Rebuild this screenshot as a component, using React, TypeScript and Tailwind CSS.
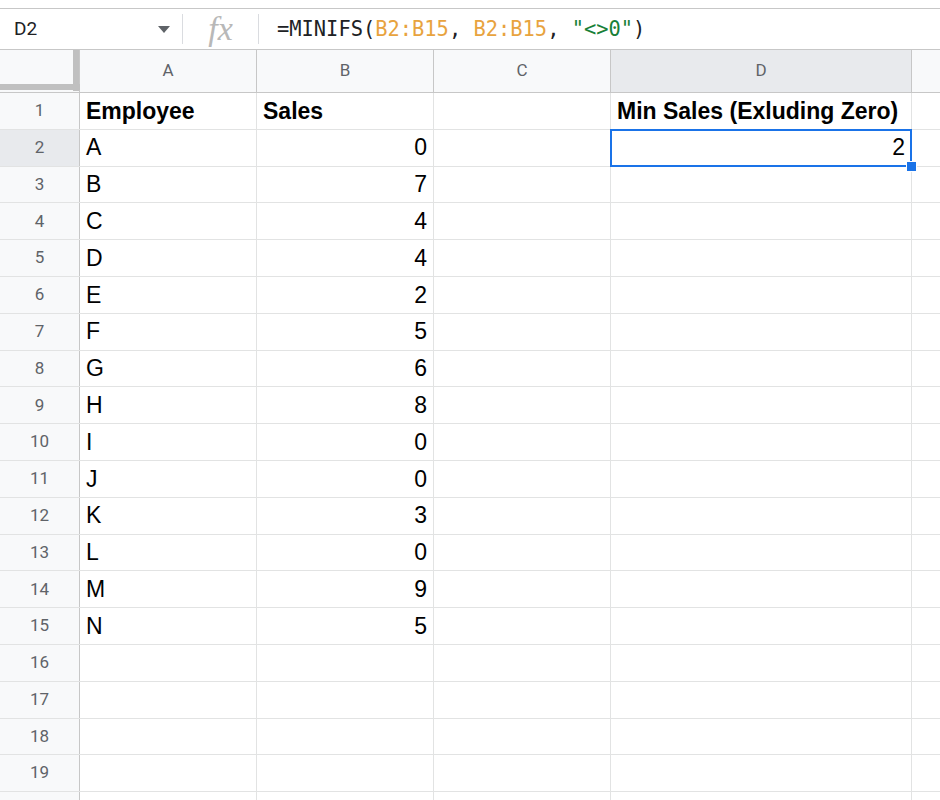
// Google Sheets — MINIFS 예시 화면
const COLS = [
  { k: "A", w: "w-[177px]" },
  { k: "B", w: "w-[177px]" },
  { k: "C", w: "w-[177px]" },
  { k: "D", w: "w-[301px]" },
  { k: "", w: "w-[177px]" }, // E열은 화면 밖으로 잘림
];

const DATA: [string, string][] = [
  ["A", "0"], ["B", "7"], ["C", "4"], ["D", "4"], ["E", "2"], ["F", "5"], ["G", "6"],
  ["H", "8"], ["I", "0"], ["J", "0"], ["K", "3"], ["L", "0"], ["M", "9"], ["N", "5"],
];

const cellFont = { fontFamily: '"Liberation Sans", Arial, sans-serif' };

function Cell({ w, children, right, bold, selected }: { w: string; children?: React.ReactNode; right?: boolean; bold?: boolean; selected?: boolean }) {
  return (
    <div
      className={`${w} relative shrink-0 h-full border-r border-[#e2e3e3] flex items-center px-[6px] text-[23px] text-black ${right ? "justify-end" : ""} ${bold ? "font-bold" : ""} ${selected ? "z-10" : ""}`}
      style={cellFont}
    >
      {children}
      {selected && (
        <>
          <div className="absolute inset-[-1px] border-2 border-[#1a73e8]" />
          <div className="absolute right-[-6px] bottom-[-6px] w-[11px] h-[11px] bg-[#1a73e8] border border-white" />
        </>
      )}
    </div>
  );
}

export default function App() {
  const rows = Array.from({ length: 20 }, (_, i) => i + 1);
  return (
    <div className="w-[940px] h-[800px] overflow-hidden bg-white" style={{ fontFamily: "Roboto, sans-serif" }}>
      <div className="h-[9px] border-b border-[#c7c7c7]" />

      {/* 수식 입력줄 */}
      <div className="h-[41px] flex items-center border-b border-[#c7c7c7]">
        <div className="w-[182px] h-full flex items-center pl-[14px] pr-[12px] justify-between">
          <span className="text-[19px] text-[#202124]">D2</span>
          <svg width="12" height="7" viewBox="0 0 12 7"><path d="M0 0h12L6 7z" fill="#5f6368" /></svg>
        </div>
        <div className="w-px h-[30px] bg-[#dadce0]" />
        <div className="w-[75px] flex justify-center text-[34px] leading-none text-[#b8b8b8] italic" style={{ fontFamily: '"Liberation Serif", serif' }}>
          fx
        </div>
        <div className="w-px h-[30px] bg-[#dadce0]" />
        <div className="pl-[18px] text-[20.4px] text-[#202124]" style={{ fontFamily: '"DejaVu Sans Mono", monospace' }}>
          =MINIFS(<span className="text-[#e8a33e]">B2:B15</span>, <span className="text-[#e8a33e]">B2:B15</span>, <span className="text-[#188038]">"&lt;&gt;0"</span>)
        </div>
      </div>

      <div className="w-[1200px]">
        {/* 열 머리 */}
        <div className="h-[43px] flex border-b border-[#c7c7c7] bg-[#f8f9fa]">
          <div className="w-[80px] shrink-0 relative border-r border-[#c7c7c7]">
            <div className="absolute right-0 top-0 w-[6px] h-[41px] bg-[#c0c0c0]" />
            <div className="absolute left-0 top-[34px] w-[80px] h-[6px] bg-[#c0c0c0]" />
          </div>
          {COLS.map((c, i) => (
            <div
              key={i}
              className={`${c.w} shrink-0 border-r border-[#c7c7c7] flex items-center justify-center text-[17px] text-[#5f6368] ${c.k === "D" ? "bg-[#e8eaed]" : ""}`}
            >
              {c.k}
            </div>
          ))}
        </div>

        {/* 행 */}
        {rows.map((r) => {
          const d = r >= 2 && r <= 15 ? DATA[r - 2] : null;
          return (
            <div key={r} className="h-[36.8px] flex border-b border-[#e2e3e3]">
              <div
                className={`w-[80px] shrink-0 border-r border-[#c7c7c7] flex items-center justify-center text-[17px] text-[#5f6368] ${r === 2 ? "bg-[#e8eaed]" : "bg-[#f8f9fa]"}`}
              >
                {r < 20 ? r : null}
              </div>
              <Cell w="w-[177px]" bold={r === 1}>{r === 1 ? "Employee" : d?.[0]}</Cell>
              <Cell w="w-[177px]" bold={r === 1} right={r !== 1}>{r === 1 ? "Sales" : d?.[1]}</Cell>
              <Cell w="w-[177px]" />
              <Cell w="w-[301px]" bold={r === 1} right={r === 2} selected={r === 2}>
                {r === 1 ? "Min Sales (Exluding Zero)" : r === 2 ? "2" : null}
              </Cell>
              <Cell w="w-[177px]" />
            </div>
          );
        })}
      </div>
    </div>
  );
}
